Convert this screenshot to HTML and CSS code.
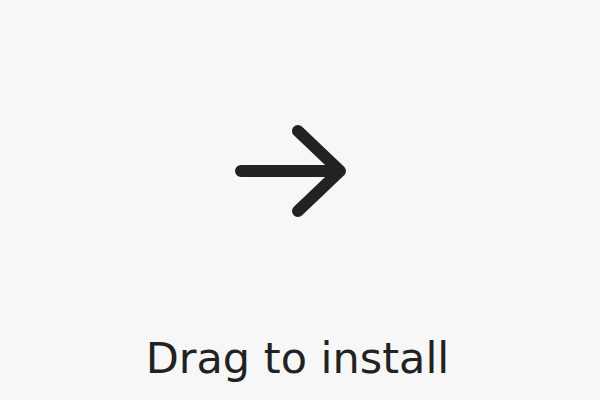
FILE: index.html
```html
<!DOCTYPE html>
<html>
<head>
<meta charset="utf-8">
<link rel="stylesheet" href="styles.css">
</head>
<body>
<main class="screen">
  <svg class="arrow" width="130" height="112" viewBox="0 0 130 112" aria-hidden="true">
    <path d="M6 56 H104 M63 16 L105 56 L63 96" fill="none" stroke="#222222" stroke-width="12" stroke-linecap="round" stroke-linejoin="round"/>
  </svg>
  <p class="label">Drag to install</p>
</main>
</body>
</html>
```

FILE: styles.css
```css
html, body {
  margin: 0;
  padding: 0;
  background: #f7f7f7;
}
.screen {
  width: 600px;
  height: 400px;
  display: flex;
  flex-direction: column;
  align-items: center;
  padding-top: 115px;
  box-sizing: border-box;
}
.arrow {
  display: block;
}
.label {
  margin: 106px 0 0 -5px;
  font-family: "DejaVu Sans", sans-serif;
  font-size: 43px;
  line-height: 50px;
  color: #222222;
  white-space: nowrap;
}
```
